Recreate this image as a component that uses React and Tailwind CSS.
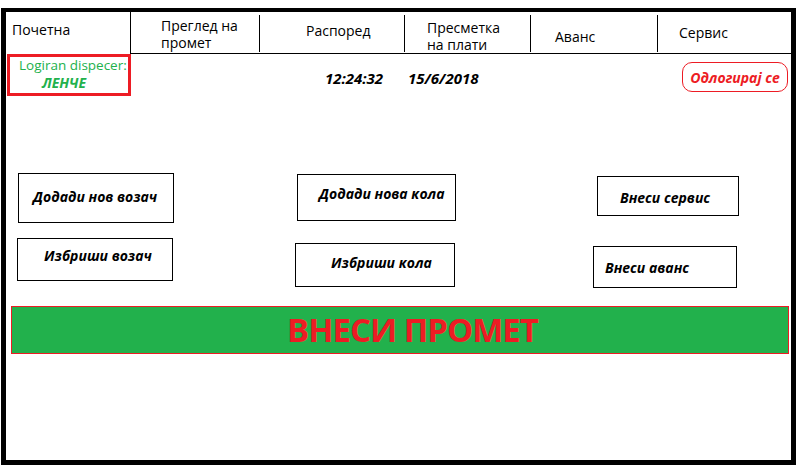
import React from "react";

function Btn({ box, text }) {
  return (
    <div className={`border border-black bg-white ${box}`}>
      <div className="text-[14px] leading-[19px] font-bold italic text-black whitespace-nowrap">
        {text}
      </div>
    </div>
  );
}

export default function App() {
  return (
    <div className="w-[800px] h-[465px] bg-white overflow-hidden font-['Open_Sans',sans-serif] text-black">
      <div className="ml-px mt-2 w-[795px] h-[457px] border-black border-x-[5px] border-t-4 border-b-[5px] flex flex-col">
        {/* nav */}
        <div className="h-[42px] flex">
          <div className="w-[124px] h-full pl-[6px] pt-[8px] text-[14px] leading-[19px]">Почетна</div>
          <div className="flex-1 flex border-b border-black text-[14px]">
            <div className="w-[129px] border-l border-black pl-[30px] pt-[5px] leading-[17px]">
              Преглед на
              <br />
              промет
            </div>
            <div className="w-[145px] pt-[3px] pb-px">
              <div className="h-full border-l border-black pl-[46px] pt-[6px] leading-[19px]">Распоред</div>
            </div>
            <div className="w-[126px] pt-[3px] pb-px">
              <div className="h-full border-l border-black pl-[22px] pt-[4px] leading-[17px]">
                Пресметка
                <br />
                на плати
              </div>
            </div>
            <div className="w-[127px] pt-[3px] pb-px">
              <div className="h-full border-l border-black pl-[24px] pt-[12px] leading-[19px]">Аванс</div>
            </div>
            <div className="flex-1 pt-[3px] pb-px">
              <div className="h-full border-l border-black pl-[21px] pt-[8px] leading-[19px]">Сервис</div>
            </div>
          </div>
        </div>

        {/* login row */}
        <div className="h-[42px] flex items-start">
          <div className="ml-px w-[124px] h-[42px] border-[3px] border-[#ed1c24]">
            <div className="pl-[9px] text-[13.5px] leading-[16px] text-[#22b14c] whitespace-nowrap">
              Logiran dispecer:
            </div>
            <div className="pl-[32px] mt-[2px] text-[14px] leading-[16px] font-bold italic text-[#22b14c]">
              ЛЕНЧЕ
            </div>
          </div>
          <div className="ml-[194px] mt-[15px] w-[83px] text-[15px] leading-[18px] font-bold italic">12:24:32</div>
          <div className="mt-[15px] text-[15px] leading-[18px] font-bold italic">15/6/2018</div>
          <div className="ml-auto mr-[3px] mt-[8px] w-[106px] h-[30px] border border-[#ed1c24] rounded-[10px] flex items-center justify-center text-[14px] font-bold italic text-[#ed1c24] whitespace-nowrap">
            Одлогирај се
          </div>
        </div>

        {/* buttons */}
        <div className="h-[210px] flex items-start">
          <div className="w-[168px] flex flex-col">
            <Btn box="ml-[12px] mt-[77px] w-[156px] h-[50px] pt-[13px] pl-[14px]" text="Додади нов возач" />
            <Btn box="ml-[11px] mt-[15px] w-[156px] h-[43px] pt-[7px] pl-[26px]" text="Избриши возач" />
          </div>
          <div className="w-[282px] flex flex-col">
            <Btn box="ml-[123px] mt-[78px] w-[159px] h-[47px] pt-[9px] pl-[21px]" text="Додади нова кола" />
            <Btn box="ml-[121px] mt-[22px] w-[160px] h-[44px] pt-[9px] pl-[35px]" text="Избриши кола" />
          </div>
          <div className="flex-1 flex flex-col">
            <Btn box="ml-[141px] mt-[80px] w-[142px] h-[40px] pt-[11px] pl-[22px]" text="Внеси сервис" />
            <Btn box="ml-[137px] mt-[30px] w-[144px] h-[42px] pt-[11px] pl-[11px]" text="Внеси аванс" />
          </div>
        </div>

        {/* big bar */}
        <div className="ml-[5px] w-[778px] h-[48px] border border-[#ed1c24] bg-[#22b14c] pl-[275px] pt-[3px]">
          <div className="text-[33px] leading-[40px] font-bold tracking-[-1px] text-[#ed1c24] whitespace-nowrap">
            ВНЕСИ ПРОМЕТ
          </div>
        </div>
      </div>
    </div>
  );
}
